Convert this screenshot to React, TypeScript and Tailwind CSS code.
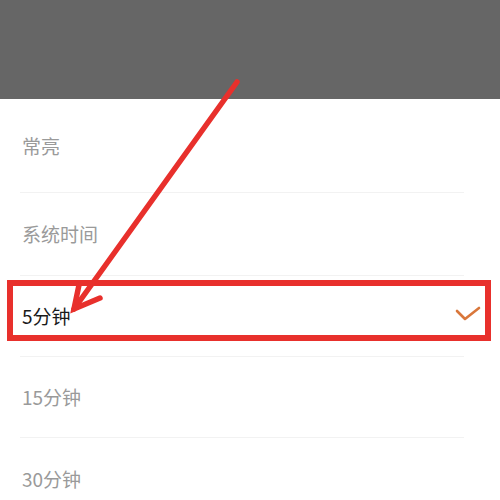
const rows = [
  { label: "常亮", h: "h-[94px]", active: false },
  { label: "系统时间", h: "h-[83px]", active: false },
  { label: "5分钟", h: "h-[81px]", active: true },
  { label: "15分钟", h: "h-[81px]", active: false },
  { label: "30分钟", h: "h-[82px]", active: false },
];

export default function App() {
  return (
    <div className="relative w-[500px] h-[500px] overflow-hidden bg-white font-['Noto_Sans_CJK_SC',sans-serif]">
      <div className="h-[99px] bg-[#666666]" />
      <ul>
        {rows.map((row, i) => (
          <li key={row.label} className={`flex items-center justify-between ${row.h} pl-[22px] pr-[19px] relative`}>
            <span className={row.active ? "text-[19px] text-[#1a1a1a]" : "text-[19px] text-[#9a9a9a]"}>{row.label}</span>
            {row.active && (
              <svg width="26" height="18" viewBox="0 0 26 18" className="mt-[-4px]">
                <polyline points="2,5 10,13 24,2" fill="none" stroke="#d9773b" strokeWidth="2.6" strokeLinecap="round" strokeLinejoin="round" />
              </svg>
            )}
            {i < rows.length - 1 && <div className="absolute bottom-0 left-[20px] right-[36px] h-px bg-[#f2f2f2]" />}
          </li>
        ))}
      </ul>

      {/* annotation overlay */}
      <div className="absolute left-[7px] top-[280px] w-[484px] h-[61px] border-[6px] border-[#e8302c]" />
      <svg className="absolute inset-0" width="500" height="500" viewBox="0 0 500 500">
        <g stroke="#e8302c" strokeWidth="5.5" strokeLinecap="round" fill="none">
          <line x1="237" y1="82" x2="74" y2="309" />
          <polyline points="79,285 74,309 100,298" strokeLinejoin="miter" />
        </g>
      </svg>
    </div>
  );
}
